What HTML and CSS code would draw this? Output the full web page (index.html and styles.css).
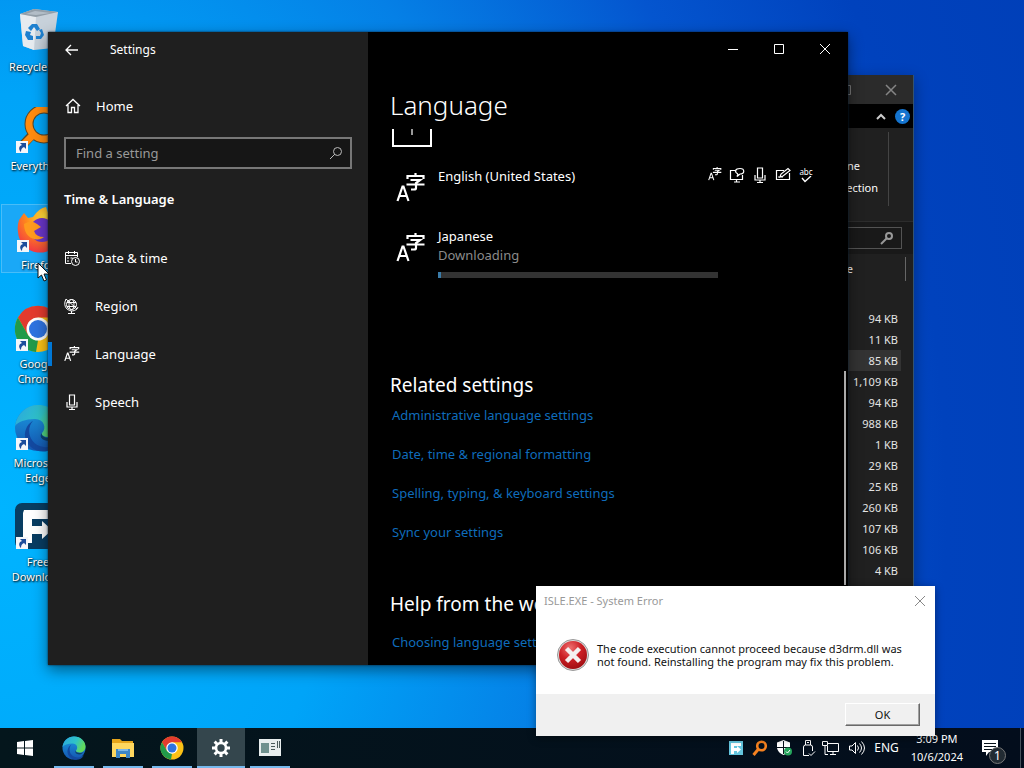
FILE: index.html
```html
<!DOCTYPE html>
<html lang="en">
<head>
<meta charset="utf-8">
<title>Desktop</title>
<link rel="stylesheet" href="styles.css">
</head>
<body>
<svg class="defs" aria-hidden="true">
  <defs>
    <radialGradient id="fox" cx=".6" cy=".2" r=".9"><stop offset="0" stop-color="#ffe03a"/><stop offset=".45" stop-color="#ff8a1c"/><stop offset="1" stop-color="#f0284c"/></radialGradient>
    <linearGradient id="edgeA" x1="0" y1="0" x2="1" y2=".4"><stop offset="0" stop-color="#2aa5e0"/><stop offset=".6" stop-color="#2fc3c8"/><stop offset="1" stop-color="#62d95a"/></linearGradient>
    <linearGradient id="edgeB" x1="0" y1="0" x2="0" y2="1"><stop offset="0" stop-color="#1b9de2"/><stop offset="1" stop-color="#1455b0"/></linearGradient>
    <radialGradient id="err" cx=".4" cy=".25" r=".8"><stop offset="0" stop-color="#ee7070"/><stop offset=".5" stop-color="#cc1f25"/><stop offset="1" stop-color="#9c0c10"/></radialGradient>
  </defs>
  <symbol id="shortcut" viewBox="0 0 12 12"><path fill="#f4f6fa" d="M0 0h12v12H0z"/><path fill="#1c4d9c" d="M4 2h6v6L8 6c-2 1-3 2-3 5C2 8 3 5 6 4z"/></symbol>
  <symbol id="lang" viewBox="0 0 30 30"><path fill="none" stroke="#fff" stroke-width="2.200" d="M1.500 28 6.500 13.500h1L12.500 28M3 23h8M11.500 6V3h16v3M19.500 0v3M14.500 7h9.500l-4 3v5q0 1.500-2 1.500h-3M10.500 11.500h18"/></symbol>
  <symbol id="mic" viewBox="0 0 16 16"><path fill="none" stroke="#fff" stroke-width="1.200" d="M5.500 1h5v10h-5zM3 8v5h10V8M8 13v2.500M5 15.500h6"/></symbol>
  <symbol id="chrome" viewBox="0 0 48 48"><circle cx="24" cy="24" r="23" fill="#fbc116"/><path fill="#e33b2e" d="M4 12.500A23 23 0 0 1 44 12.500H24L14 30z"/><path fill="#229a4a" d="M4 12.500 14 30l10 5.500L22 47A23 23 0 0 1 4 12.500"/><circle cx="24" cy="24" r="11.500" fill="#fff"/><circle cx="24" cy="24" r="9" fill="#2f73e0"/></symbol>
  <symbol id="edge" viewBox="0 0 48 48"><circle cx="24" cy="24" r="23" fill="url(#edgeB)"/><path fill="url(#edgeA)" d="M1 22C3 9 13 1 24 1c14 0 23 10 23 20 0 8-6 12-12 12-5 0-8-2-7-4 5-5 2-14-7-14C11 15 4 18 1 22"/><path fill="#1349a0" d="M19 17c-7 7-5 24 11 26 6 1 11-2 14-5-9 18-35 8-33-9 1-6 4-10 8-12"/><path fill="#06202e" opacity=".55" d="M28 29c-1 2 2 5 7 5 4 0 7-1 9-3-4 6-9 7-14 5-4-2-4-5-2-7"/></symbol>
</svg>
<div class="screen">
  <main class="desktop">
    <div class="shortcuts">
      <a class="shortcut" href="#"><svg class="art" viewBox="0 0 48 48"><path fill="#c7d1da" d="M6 6 20 1l24 3-5 36-19 2-11-4z"/><path fill="#e6ebef" d="m6 6 16 3-2 33-11-4z"/><path fill="#929ea8" d="m6 6 14-5 24 3-22 5z"/><path fill="#b2bdc7" d="m12 6 9-3 16 2-15 2z"/><path fill="#1e80cf" d="m14 20 4-4h5l3 5-3 2-3-4-3 4zM25 22l3-1 2 6-3 4h-5v-3h4l1-3zM12 23l5 1-1 3 3 1v4h-5l-3-5z"/></svg><span>Recycle Bin</span></a>
      <a class="shortcut" href="#"><svg class="art" viewBox="0 0 48 48"><circle cx="30" cy="17" r="15" fill="none" stroke="#56482c" stroke-width="9"/><path stroke="#56482c" stroke-width="9" d="M18 28 6 41"/><circle cx="30" cy="17" r="15" fill="none" stroke="#ff8b0f" stroke-width="7"/><path stroke="#ff8b0f" stroke-width="7" d="M19 28 7 40"/><use href="#shortcut" x="2" y="34" width="12" height="12"/></svg><span>Everything</span></a>
      <a class="shortcut selected" href="#"><svg class="art" viewBox="0 0 48 48"><path fill="url(#fox)" d="M4 14 9 7l4 5 5-1q6-9 13-10l3 8c10 3 14 12 12 22a22 22 0 0 1-43-5Q2 20 4 14"/><circle cx="27" cy="24" r="12" fill="#6a35c9"/><path fill="#ff9a1e" d="M9 18q7-5 13 0l4 3-7 4q2 6 10 6c-5 5-20 3-20-13"/><use href="#shortcut" x="2" y="34" width="12" height="12"/></svg><span>Firefox</span></a>
      <a class="shortcut" href="#"><svg class="art" viewBox="0 0 48 48"><use href="#chrome"/><use href="#shortcut" x="2" y="34" width="12" height="12"/></svg><span>Google Chrome</span></a>
      <a class="shortcut" href="#"><svg class="art" viewBox="0 0 48 48"><use href="#edge"/><use href="#shortcut" x="2" y="34" width="12" height="12"/></svg><span>Microsoft Edge</span></a>
      <a class="shortcut" href="#"><svg class="art" viewBox="0 0 48 48"><rect x="1" y="0" width="46" height="46" rx="7" fill="#083d62"/><path fill="#fff" d="M10 7h33v9H18v7h10v-5l10 9-10 9v-5H18v9H9V10z"/><use href="#shortcut" x="2" y="34" width="12" height="12"/></svg><span>Free Download</span></a>
    </div>

    <section class="explorer" aria-label="File list">
      <header class="explorer-title"><button class="bare" aria-label="Maximize"><svg width="12" height="12"><path fill="none" stroke="#777" d="M1.500 1.500h9v9h-9z"/></svg></button><button class="bare" aria-label="Close"><svg width="12" height="12"><path stroke="#858585" stroke-width="1.500" d="m1 1 10 10M11 1 1 11"/></svg></button></header>
      <div class="explorer-tabs"><svg width="12" height="8"><path fill="none" stroke="#ccc" stroke-width="2" d="m2 7 4-4 4 4"/></svg><span class="help">?</span></div>
      <div class="ribbon"><div class="ribbon-group"><span>Select none</span><span>Invert selection</span></div></div>
      <div class="explorer-search"><div class="explorer-field"><svg width="14" height="14"><circle cx="9" cy="5" r="3" fill="none" stroke="#999" stroke-width="2"/><path stroke="#999" stroke-width="2" d="m7 7-6 6"/></svg></div></div>
      <table class="files">
        <thead><tr><th><span>Size</span></th></tr></thead>
        <tbody><tr><td>94 KB</td></tr><tr><td>11 KB</td></tr><tr class="current"><td>85 KB</td></tr><tr><td>1,109 KB</td></tr><tr><td>94 KB</td></tr><tr><td>988 KB</td></tr><tr><td>1 KB</td></tr><tr><td>29 KB</td></tr><tr><td>25 KB</td></tr><tr><td>260 KB</td></tr><tr><td>107 KB</td></tr><tr><td>106 KB</td></tr><tr><td>4 KB</td></tr></tbody>
      </table>
    </section>

    <section class="settings" aria-label="Settings">
      <nav class="side">
        <header class="side-title"><button class="bare" aria-label="Back"><svg width="16" height="12"><path fill="none" stroke="#fff" stroke-width="1.300" d="M14 6H2m5-5L2 6l5 5"/></svg></button><span>Settings</span></header>
        <a class="nav-item home" href="#"><svg width="16" height="16"><path fill="none" stroke="#fff" stroke-width="1.300" d="m1 8 7-6.500L15 8M3 7v7.500h3.500v-5h3v5H13V7"/></svg><span>Home</span></a>
        <div class="search"><input type="text" placeholder="Find a setting" aria-label="Find a setting"><svg width="14" height="14"><circle cx="8.500" cy="5.500" r="4" fill="none" stroke="#bbb"/><path stroke="#bbb" d="m6 8-5 5"/></svg></div>
        <h2>Time &amp; Language</h2>
        <a class="nav-item" href="#"><svg width="16" height="16"><path fill="none" stroke="#fff" d="M7 13.500H1.500v-11h12V7M1.500 5.500h12M4.500 1v3M10.500 1v3M3 8h2m1.500 0h2M3 11h2"/><circle cx="11.500" cy="11.500" r="4" fill="none" stroke="#fff"/><path fill="none" stroke="#fff" d="M11.500 9v3h2"/></svg><span>Date &amp; time</span></a>
        <a class="nav-item" href="#"><svg width="16" height="16"><circle cx="7.500" cy="6.500" r="5" fill="none" stroke="#fff"/><ellipse cx="7.500" cy="6.500" rx="2.500" ry="5" fill="none" stroke="#fff"/><path fill="none" stroke="#fff" d="M3 4.500h9M3 8.500h9M2 1Q-1 7 3 11q5 4 10 0l1-2M7.500 13v2.500M4 15.500h7M2 1l11 10"/></svg><span>Region</span></a>
        <a class="nav-item active" href="#"><svg width="16" height="16"><use href="#lang"/></svg><span>Language</span></a>
        <a class="nav-item" href="#"><svg width="16" height="16"><use href="#mic"/></svg><span>Speech</span></a>
      </nav>
      <div class="page">
        <header class="controls">
          <button class="bare" aria-label="Minimize"><svg width="12" height="12"><path stroke="#fff" d="M1 6.500h10"/></svg></button>
          <button class="bare" aria-label="Maximize"><svg width="12" height="12"><path fill="none" stroke="#fff" d="M1.500 1.500h9v9h-9z"/></svg></button>
          <button class="bare" aria-label="Close"><svg width="12" height="12"><path stroke="#fff" d="m1 1 10 10M11 1 1 11"/></svg></button>
        </header>
        <h1>Language</h1>
        <div class="content">
          <svg class="add" width="40" height="18"><path fill="none" stroke="#fff" stroke-width="2" d="M1 0v17h38V0"/><path stroke="#ccc" stroke-width="1.500" d="M20 0v6"/></svg>
          <div class="language">
            <svg width="30" height="30"><use href="#lang"/></svg>
            <div class="language-text"><span>English (United States)</span></div>
            <div class="features">
              <svg width="14" height="14"><use href="#lang"/></svg>
              <svg width="16" height="16"><path fill="none" stroke="#fff" stroke-width="1.200" d="M6 3.500H1.500v9h12V8M5 15h6M7.500 12.500V15M9 7l-1 2.500L11 7c5 0 5-5.500 0-5.500S5 5 9 7"/></svg>
              <svg width="16" height="16"><use href="#mic"/></svg>
              <svg width="16" height="16"><path fill="none" stroke="#fff" stroke-width="1.200" d="M9 3.500H1.500v9h13V6M5 10l1-3 7-5.500 2 2L8 9zM3 10h5"/></svg>
              <div class="spelling"><span>abc</span><svg width="12" height="7"><path fill="none" stroke="#fff" stroke-width="1.300" d="m2 2 3 3.500L11 0"/></svg></div>
            </div>
          </div>
          <div class="language">
            <svg width="30" height="30"><use href="#lang"/></svg>
            <div class="language-text"><span>Japanese</span><span class="muted">Downloading</span><div class="progress"><div class="progress-fill"></div></div></div>
          </div>
          <h3 class="related">Related settings</h3>
          <div class="links"><a href="#">Administrative language settings</a><a href="#">Date, time &amp; regional formatting</a><a href="#">Spelling, typing, &amp; keyboard settings</a><a href="#">Sync your settings</a></div>
          <h3 class="from-web">Help from the web</h3>
          <div class="links"><a href="#">Choosing language settings</a></div>
        </div>
        <div class="scrollbar"></div>
      </div>
    </section>
    <svg class="cursor" width="13" height="20"><path fill="#fff" stroke="#111" d="M1 1v15l3.500-3 2.500 6 2.500-1L7 12h5z"/></svg>
  </main>

  <footer class="taskbar">
    <div class="apps">
      <button class="bare start" aria-label="Start"><svg width="16" height="16" fill="#fff"><path d="m0 2 7-1v6.500H0zM8 1l8-1v7.500H8zM0 8.500h7V15l-7-1zM8 8.500h8V16l-8-1z"/></svg></button>
      <button class="bare app" aria-label="Edge"><svg width="24" height="24"><use href="#edge"/></svg></button>
      <button class="bare app" aria-label="File Explorer"><svg width="24" height="24"><path fill="#e6a51b" d="M1 3h8l2 2h11v16H1z"/><path fill="#ffd75e" d="M1 7h22v14H1z"/><path fill="#3d86c6" d="M5 13h14v9h-4v-4H9v4H5z"/><path fill="#7db8e8" d="M7 13h10v2H7z"/></svg></button>
      <button class="bare app" aria-label="Chrome"><svg width="24" height="24"><use href="#chrome"/></svg></button>
      <button class="bare app current-app" aria-label="Settings"><svg width="20" height="20" viewBox="0 0 20 20"><circle cx="10" cy="10" r="5" fill="none" stroke="#fff" stroke-width="2.600"/><path stroke="#fff" stroke-width="3" d="M10 1v4M10 15v4M1 10h4M15 10h4M3.600 3.600l2.900 2.900M13.500 13.500l2.900 2.900M3.600 16.400l2.900-2.900M13.500 6.500l2.900-2.900"/></svg></button>
      <button class="bare app" aria-label="Application"><svg width="24" height="24"><path fill="#e8eeee" d="M1 3h22v17H1z"/><path fill="#6f918e" d="M3 7h8v10H3z"/><path fill="none" stroke="#4b5c5c" d="M13 7.500h4M13 10.500h4M13 13.500h4M19.500 5v7M21.500 5v7"/></svg></button>
    </div>
    <div class="tray">
      <svg width="16" height="16"><path fill="#64c5de" d="M1 1h14v14H1z"/><path fill="#fff" d="M3 3h10v3H6v2h3V6l4 3.500L9 13v-2H6v3H3z"/></svg>
      <svg width="16" height="16"><circle cx="9.500" cy="6" r="4.300" fill="none" stroke="#f58220" stroke-width="2.600"/><path stroke="#f58220" stroke-width="3" d="m6.500 9-5 6"/></svg>
      <svg width="16" height="16"><path fill="#fff" d="M7.500 0 14 2.500V8q-1 5-6.500 7Q2 13 1 8V2.500z"/><path stroke="#07121a" d="M7.500 1v13M1 7.500h13"/><circle cx="12" cy="11.500" r="4" fill="#25a55c"/><path fill="none" stroke="#fff" d="m10 11.500 1.500 1.500 2.500-3"/></svg>
      <svg width="16" height="16"><path fill="none" stroke="#fff" d="M5.500 5V.5h5V5M3.500 15.500V7q0-2 2-2h5q2 0 2 2v4M3.500 15.500H9M7 2.500h2m0 11 2 2 4-4"/></svg>
      <svg width="18" height="16"><path fill="none" stroke="#fff" d="M6 3.500h10.500v8h-11V6M8 14.500h6M11 12v3M.5 1.500h5v4h-5zM3 6v8.500h3"/></svg>
      <svg width="18" height="16"><path fill="none" stroke="#fff" d="M1.500 6v4H4l3.500 3.500v-11L4 6zM9.500 5.500q2 2.500 0 5M11.500 3.500q4 4.500 0 9M13.500 1.500q6 6.500 0 13"/></svg>
      <span class="locale">ENG</span>
      <div class="clock"><span>3:09 PM</span><span>10/6/2024</span></div>
      <button class="bare notices" aria-label="Notifications, 1 new"><svg width="18" height="18"><path fill="#fff" d="M1 1h16v12H8l-3 4v-4H1z"/><path stroke="#07121a" d="M3 4.500h12M3 7.500h12M3 10.500h8"/></svg><span class="badge">1</span></button>
    </div>
  </footer>

  <section class="dialog" role="alertdialog" aria-label="System Error">
    <header class="dialog-title"><span>ISLE.EXE - System Error</span><button class="bare" aria-label="Close"><svg width="12" height="12"><path stroke="#888" d="m1 1 10 10M11 1 1 11"/></svg></button></header>
    <div class="dialog-body"><svg width="32" height="32"><circle cx="16" cy="16" r="15.500" fill="#ddd" stroke="#999"/><circle cx="16" cy="16" r="14" fill="url(#err)"/><path stroke="#f4efef" stroke-width="4.500" d="m9.500 9.500 13 13M22.500 9.500l-13 13"/></svg><p>The code execution cannot proceed because d3drm.dll was<br>not found. Reinstalling the program may fix this problem.</p></div>
    <footer class="dialog-foot"><button class="ok">OK</button></footer>
  </section>
</div>
</body>
</html>
```
FILE: styles.css
```css
* { box-sizing: border-box; }
body { margin: 0; font-family: "Noto Sans", "Open Sans", sans-serif; font-size: 13px; line-height: 20px; color: #fff; }
a { color: inherit; text-decoration: none; }
svg { display: block; flex: none; }
h1, h2, h3, p { margin: 0; font-weight: 400; }
.defs { position: absolute; width: 0; height: 0; }
.bare { display: flex; align-items: center; justify-content: center; padding: 0; border: 0; background: none; color: inherit; font: inherit; }
.screen { position: relative; display: flex; flex-direction: column; height: 100vh; overflow: hidden; }
.desktop { position: relative; flex: 1; background: radial-gradient(110% 190% at 0 70%, #00b4ff 0%, #00a4f8 30%, #0580e6 50%, #0455cf 68%, #0042bd 84%, #003fb8 100%); }

.shortcuts { display: flex; flex-direction: column; gap: 1px; width: 76px; padding-top: 6px; }
.shortcut { display: flex; flex-direction: column; align-items: center; height: 98px; padding: 2px 6px 0; font-size: 11px; line-height: 15px; text-align: center; text-shadow: 1px 1px 2px #000, 0 0 2px #0008; }
.shortcut .art { width: 48px; height: 48px; margin-bottom: 3px; }
.selected { height: 69px; margin: 0 0 29px 1px; padding-top: 1px; border: 1px solid #48bdf8; background: #1aa8f7; }

.explorer { position: absolute; left: 50%; right: 110px; top: 75px; bottom: 100px; overflow: hidden; border-right: 1px solid #34536f; background: #202020; font-size: 11px; box-shadow: 0 4px 14px #0005; }
.explorer-title { display: flex; justify-content: flex-end; height: 29px; background: #2b2b2b; }
.explorer-title .bare { width: 45px; }
.explorer-tabs { display: flex; align-items: center; justify-content: flex-end; gap: 8px; height: 24px; padding-right: 3px; background: #000; }
.help { width: 15px; height: 15px; border-radius: 50%; background: #1474cf; font-weight: 700; line-height: 15px; text-align: center; }
.ribbon { height: 94px; padding: 4px 24px 16px 0; border-bottom: 1px solid #2c2c2c; }
.ribbon-group { display: flex; flex-direction: column; align-items: flex-end; gap: 2px; height: 74px; padding: 24px 10px 0 0; border-right: 1px solid #444; }
.ribbon-group span:first-child { padding-right: 18px; }
.explorer-search { padding: 5px 11px 5px 0; background: #191919; }
.explorer-field { display: flex; align-items: center; justify-content: flex-end; height: 22px; padding-right: 7px; border: 1px solid #535353; }
.files { width: 100%; border-collapse: collapse; text-align: right; }
.files th { padding: 3px 7px 27px 0; font-weight: 400; }
.files th span { display: block; height: 24px; padding-right: 52px; border-right: 1px solid #666; line-height: 24px; }
.files td { height: 21px; padding: 0 15px 0 0; line-height: 21px; color: #e4e4e4; }
.current td { background: linear-gradient(#333, #333) left / calc(100% - 12px) 100% no-repeat; }

.settings { position: absolute; left: 48px; right: 176px; top: 32px; bottom: 63px; display: grid; grid-template-columns: 320px 1fr; background: #000; box-shadow: 0 0 2px #0b2438, 0 5px 14px #0007; }
.side { min-width: 0; background: #1f1f1f; }
.side-title { display: flex; align-items: center; gap: 14px; height: 36px; font-size: 12px; }
.side-title .bare { width: 48px; height: 34px; }
.nav-item { display: flex; align-items: center; gap: 15px; height: 48px; padding-left: 16px; font-size: 13px; }
.home { height: 40px; margin: 18px 0 11px; padding-left: 17px; }
.active { background: linear-gradient(#0078d7, #0078d7) left / 4px 24px no-repeat; }
.search { display: flex; align-items: center; height: 32px; margin: 0 16px; padding-right: 7px; border: 2px solid #777; background: #161616; }
.search input { flex: 1; min-width: 0; padding: 0 10px; border: 0; outline: 0; background: none; color: #fff; font: 13px/20px "Noto Sans", sans-serif; }
.search input::placeholder { color: #999; opacity: 1; }
.side h2 { margin: 20px 16px 25px; font-size: 13px; font-weight: 600; }
.page { position: relative; min-width: 0; overflow: hidden; }
.controls { display: flex; justify-content: flex-end; height: 34px; }
.controls .bare { width: 46px; }
h1 { height: 63px; padding: 24px 22px 0; font-size: 26px; line-height: 30px; font-weight: 300; }
.content { padding: 0 34px 0 22px; }
.add { margin-left: 2px; }
.language { display: flex; align-items: flex-start; gap: 12px; height: 60px; padding-left: 6px; }
.add + .language { margin-top: 20px; }
.language > svg { margin-top: 6px; }
.language-text { display: flex; flex-direction: column; max-width: 280px; flex: 1; line-height: 19px; }
.muted { color: #8b8b8b; }
.progress { height: 6px; margin-top: 7px; background: #333; }
.progress-fill { width: 1%; height: 6px; background: #3a7ba8; }
.features { display: flex; gap: 7px; margin-left: auto; }
.spelling { display: flex; flex-direction: column; align-items: center; width: 16px; font-size: 8px; line-height: 9px; }
.related { margin-top: 84px; }
h3 { font-size: 19px; line-height: 28px; }
.from-web { margin-top: 48px; }
.links { display: flex; flex-direction: column; gap: 19px; margin-top: 6px; padding-left: 2px; color: #0f6cbb; }
.from-web + .links { margin-top: 14px; }
.scrollbar { position: absolute; right: 2px; top: 339px; bottom: 80px; width: 2px; background: #aaa; }
.cursor { position: absolute; left: 37px; top: 262px; }

.taskbar { display: flex; justify-content: space-between; height: 40px; background: linear-gradient(90deg, #04161c, #030d1c); }
.apps { display: flex; gap: 1px; }
.start { width: 49px; }
.app { width: 48px; height: 40px; background: linear-gradient(#76b9ed, #76b9ed) bottom / 40px 2px no-repeat; }
.current-app { background-color: #34464d; background-size: 48px 2px; }
.tray { display: flex; align-items: center; gap: 8px; padding-right: 3px; font-size: 12px; }
.tray > svg:nth-child(5) { margin-left: -2px; }
.locale { font-size: 12px; }
.clock { display: flex; flex-direction: column; align-items: center; font-size: 11px; padding: 0 6px 0 4px; line-height: 18px; }
.notices { position: relative; width: 44px; height: 40px; padding-right: 18px; border-right: 1px solid #46525c; }
.badge { position: absolute; right: 14px; bottom: 4px; width: 17px; height: 17px; border: 1px solid #777; border-radius: 50%; background: #222b33; font-size: 12px; line-height: 15px; text-align: center; }

.dialog { position: absolute; right: 89px; bottom: 32px; min-width: 399px; background: #fff; color: #111; box-shadow: 0 2px 8px #0006; }
.dialog-title { display: flex; justify-content: space-between; align-items: center; height: 30px; padding: 0 8px; color: #999; font-size: 11px; }
.dialog-title .bare { width: 14px; }
.dialog-body { display: flex; align-items: center; gap: 8px; height: 78px; padding: 0 21px; font-size: 11px; line-height: 13px; white-space: nowrap; }
.dialog-foot { display: flex; justify-content: flex-end; padding: 9px 15px 10px; background: #f0f0f0; }
.ok { width: 75px; height: 23px; padding: 0; border: 1px solid; border-color: #fff #696969 #696969 #fff; box-shadow: inset -1px -1px #a0a0a0; background: #f0f0f0; color: #111; font: 11px/18px "Noto Sans", sans-serif; }
```
